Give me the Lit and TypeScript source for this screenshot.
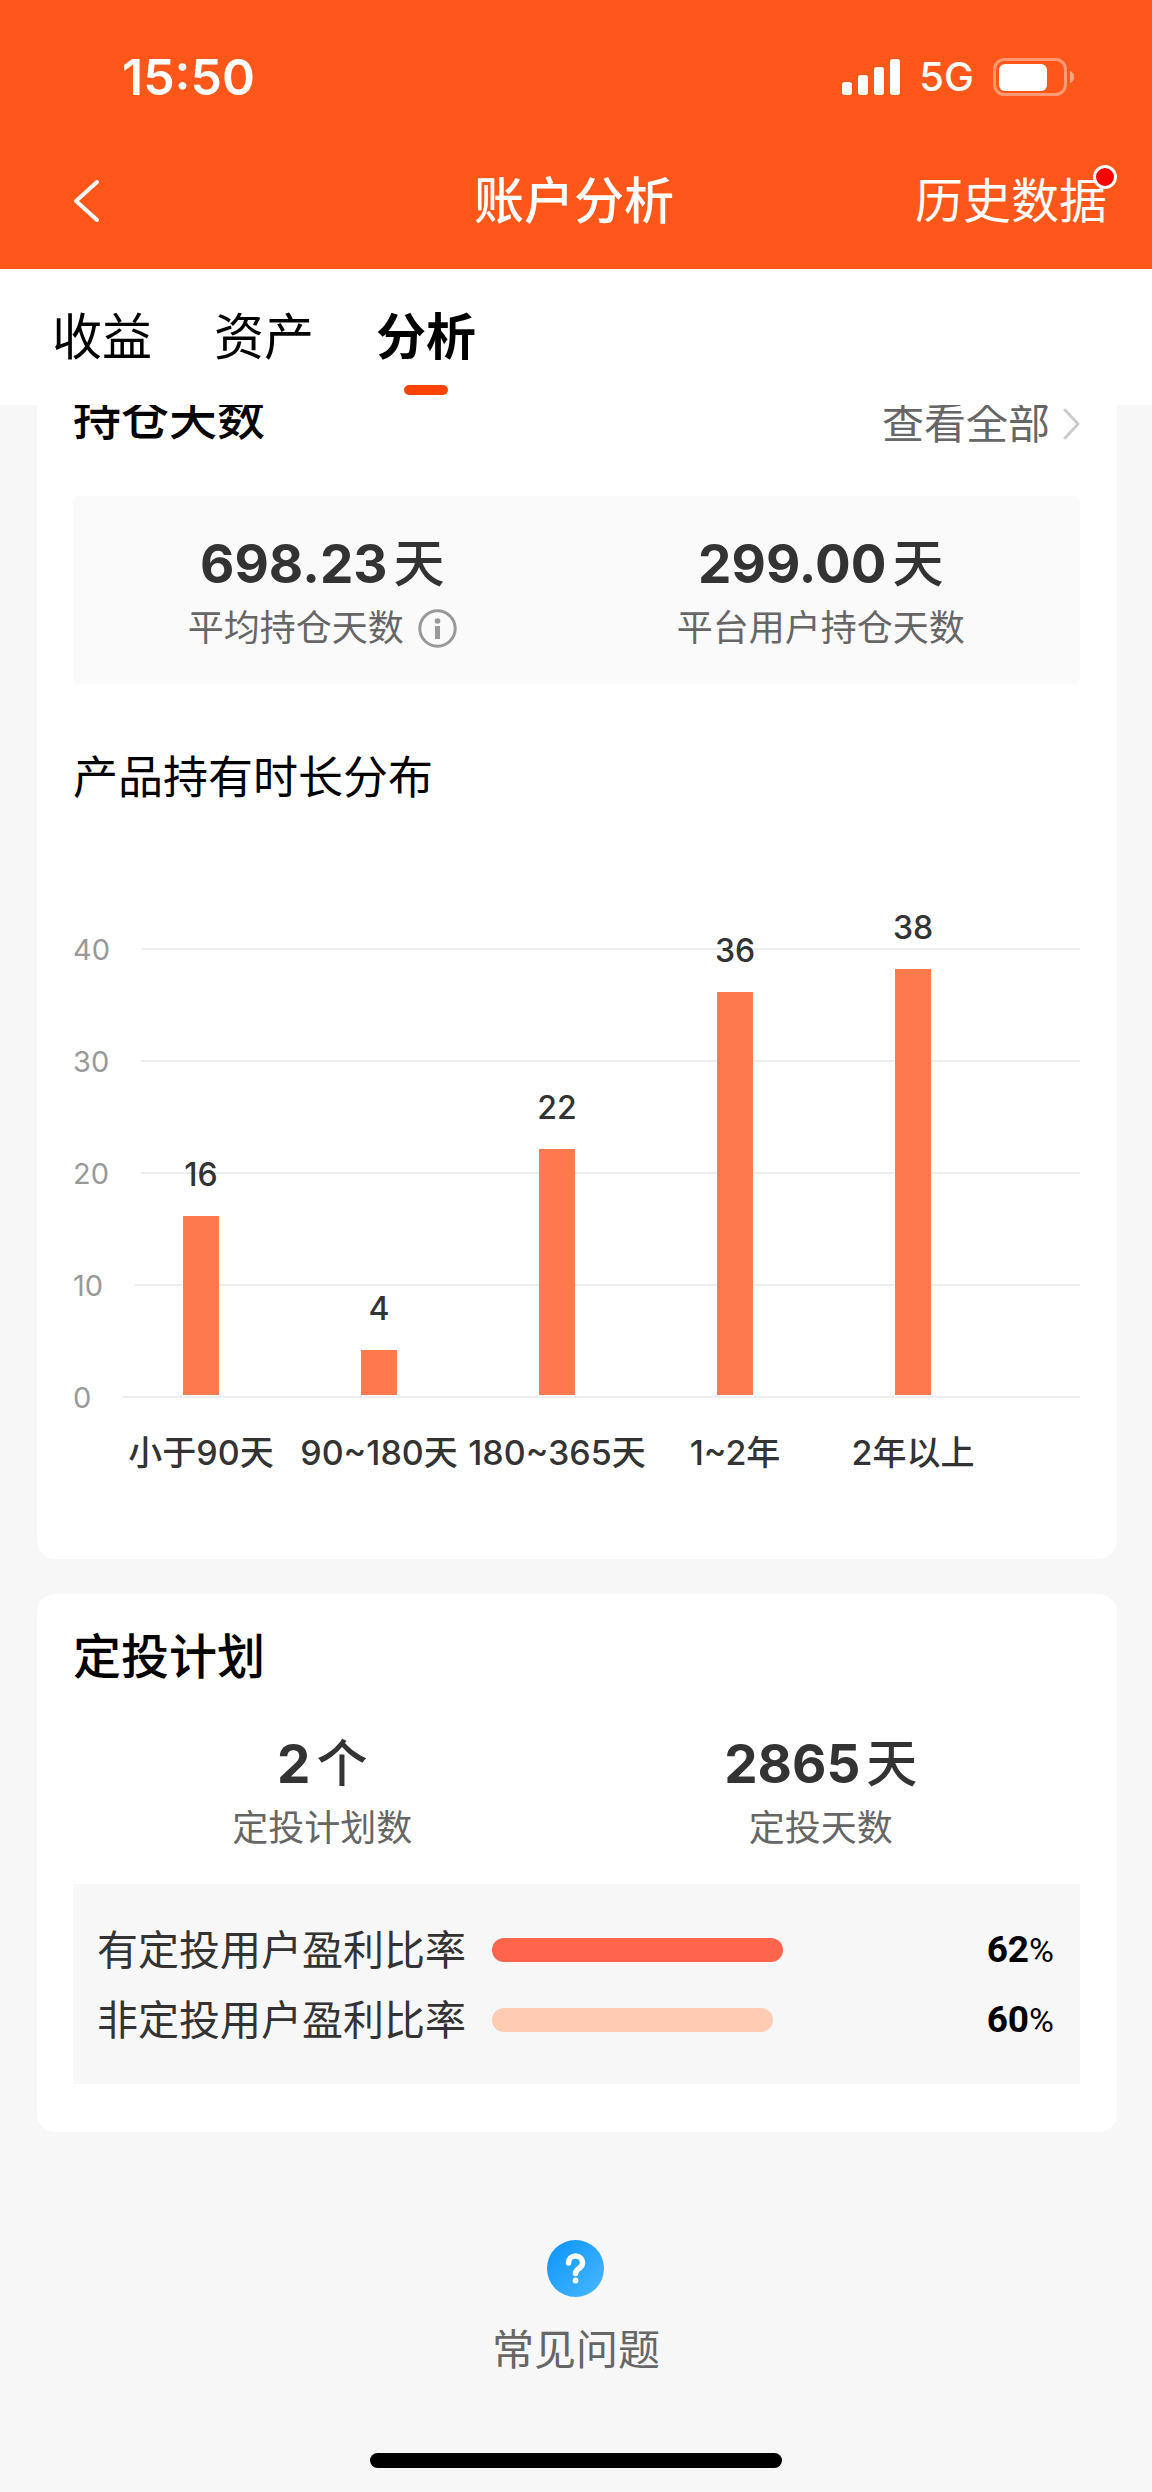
import { LitElement, html, css, svg } from "lit";
import { customElement, property, state } from "lit/decorators.js";
import { classMap } from "lit/directives/class-map.js";
import { styleMap } from "lit/directives/style-map.js";

interface Metric {
  value: string;
  unit: string;
  label: string;
  info?: boolean;
}

interface Bucket {
  label: string;
  count: number;
}

interface Rate {
  label: string;
  percent: number;
  tone: "strong" | "soft";
}

const reset = css`
  * {
    box-sizing: border-box;
  }
  button,
  a {
    font: inherit;
    color: inherit;
    background: none;
    border: 0;
    margin: 0;
    padding: 0;
    text-decoration: none;
    cursor: pointer;
  }
  svg {
    display: block;
    flex: none;
  }
`;

@customElement("status-bar")
export class StatusBar extends LitElement {
  static styles = [
    reset,
    css`
      :host {
        display: flex;
        align-items: center;
        justify-content: space-between;
        padding: 47px 78px 0 122px;
        line-height: 60px;
      }
      .time {
        font-size: 50px;
        font-weight: 600;
      }
      .indicators {
        display: flex;
        align-items: center;
        gap: 19px;
      }
      .network {
        font-size: 40px;
        font-weight: 500;
      }
    `,
  ];

  render() {
    return html`
      <span class="time">15:50</span>
      <div class="indicators">
        <svg width="58" height="38" viewBox="0 0 58 38" fill="#fff" aria-hidden="true">
          <rect x="0" y="24" width="10" height="13" rx="3" />
          <rect x="16" y="17" width="10" height="20" rx="3" />
          <rect x="32" y="9" width="10" height="28" rx="3" />
          <rect x="48" y="1" width="10" height="36" rx="3" />
        </svg>
        <span class="network">5G</span>
        <svg width="81" height="38" viewBox="0 0 81 38" aria-hidden="true">
          <rect x="1.5" y="1.5" width="71" height="35" rx="10" fill="none" stroke="#fff" stroke-opacity=".4" stroke-width="3" />
          <rect x="6" y="6" width="48" height="27" rx="6" fill="#fff" />
          <path d="M77 13c3 1 4 3 4 6s-1 5-4 6z" fill="#fff" fill-opacity=".45" />
        </svg>
      </div>
    `;
  }
}

@customElement("metric-pair")
export class MetricPair extends LitElement {
  @property({ attribute: false }) metrics: Metric[] = [];

  static styles = [
    reset,
    css`
      :host {
        display: block;
      }
      .pair {
        display: grid;
        grid-template-columns: 1fr 1fr;
        padding-right: 10px;
      }
      .metric {
        display: flex;
        flex-direction: column;
        align-items: center;
        gap: 12px;
      }
      .figure {
        display: flex;
        align-items: center;
        gap: 6px;
        line-height: 60px;
        color: #333;
      }
      .value {
        font-size: 53px;
        font-weight: 700;
      }
      .unit {
        font-size: 51px;
        font-weight: 500;
      }
      .caption {
        display: flex;
        align-items: center;
        gap: 14px;
        font-size: 36px;
        line-height: 44px;
        color: #666;
      }
    `,
  ];

  render() {
    return html`
      <div class="pair">
        ${this.metrics.map(
          (m) => html`
            <div class="metric">
              <div class="figure">
                <span class="value">${m.value}</span>
                <span class="unit">${m.unit}</span>
              </div>
              <div class="caption">
                <span>${m.label}</span>
                ${m.info
                  ? html`<button aria-label="说明">
                      <svg width="39" height="39" viewBox="0 0 39 39" aria-hidden="true">
                        <circle cx="19.5" cy="19.5" r="17.7" fill="none" stroke="#999" stroke-width="3" />
                        <circle cx="19.5" cy="12" r="2.8" fill="#999" />
                        <rect x="17" y="17" width="5" height="13" fill="#999" />
                      </svg>
                    </button>`
                  : ""}
              </div>
            </div>
          `
        )}
      </div>
    `;
  }
}

@customElement("holding-chart")
export class HoldingChart extends LitElement {
  @property({ attribute: false }) buckets: Bucket[] = [];

  static styles = [
    reset,
    css`
      :host {
        display: block;
      }
      .chart {
        display: grid;
        min-height: 584px;
      }
      .scale,
      .columns {
        grid-area: 1 / 1;
      }
      .tick {
        display: flex;
        align-items: center;
        gap: 32px;
        height: 112px;
        font-size: 29px;
        color: #999;
      }
      .rule {
        flex: 1;
        height: 2px;
        background: #eee;
      }
      .columns {
        display: flex;
        align-items: flex-end;
        align-self: end;
        padding: 0 78px 0 39px;
        font-weight: 500;
        color: #333;
      }
      .column {
        flex: 1 1 0;
        min-width: 0;
        display: flex;
        flex-direction: column;
        align-items: center;
        white-space: nowrap;
      }
      .count {
        font-size: 32px;
        line-height: 40px;
        margin-bottom: 21px;
      }
      .bar {
        width: 36px;
        height: calc(var(--count) * 112px / 10);
        background: #ff794e;
      }
      .bucket {
        margin-top: 34px;
        font-size: 34px;
        line-height: 48px;
        height: 48px;
      }
    `,
  ];

  render() {
    return html`
      <div class="chart">
        <div class="scale">
          ${[40, 30, 20, 10, 0].map((t) => html`<div class="tick"><span>${t}</span><span class="rule"></span></div>`)}
        </div>
        <div class="columns">
          ${this.buckets.map(
            (b) => html`
              <div class="column">
                <span class="count">${b.count}</span>
                <span class="bar" style=${styleMap({ "--count": String(b.count) })}></span>
                <span class="bucket">${b.label}</span>
              </div>
            `
          )}
        </div>
      </div>
    `;
  }
}

@customElement("rate-list")
export class RateList extends LitElement {
  @property({ attribute: false }) rates: Rate[] = [];

  static styles = [
    reset,
    css`
      :host {
        display: block;
        padding: 31px 26px 29px 24px;
        background: #f7f7f7;
        line-height: 60px;
      }
      .row {
        display: flex;
        align-items: center;
        height: 70px;
      }
      .label {
        font-size: 41px;
        color: #333;
        margin-right: 26px;
      }
      .track {
        flex: 1;
      }
      .fill {
        height: 24px;
        border-radius: 12px;
      }
      .strong {
        background: #ff654d;
      }
      .soft {
        background: #ffccb3;
      }
      .percent {
        width: 93px;
        text-align: right;
        font-family: "Roboto", "Noto Sans CJK SC", sans-serif;
        font-size: 37px;
        font-weight: 700;
        color: #000;
      }
      .sign {
        font-size: 34px;
        font-weight: 400;
      }
    `,
  ];

  render() {
    return this.rates.map(
      (r) => html`
        <div class="row">
          <span class="label">${r.label}</span>
          <div class="track">
            <div class=${classMap({ fill: true, [r.tone]: true })} style=${styleMap({ width: `${r.percent}%` })}></div>
          </div>
          <span class="percent">${r.percent}<span class="sign">%</span></span>
        </div>
      `
    );
  }
}

@customElement("app-root")
export class AppRoot extends LitElement {
  @state() private tab = "分析";

  private readonly tabs = ["收益", "资产", "分析"];

  private readonly holding: Metric[] = [
    { value: "698.23", unit: "天", label: "平均持仓天数", info: true },
    { value: "299.00", unit: "天", label: "平台用户持仓天数" },
  ];

  private readonly plan: Metric[] = [
    { value: "2", unit: "个", label: "定投计划数" },
    { value: "2865", unit: "天", label: "定投天数" },
  ];

  private readonly buckets: Bucket[] = [
    { label: "小于90天", count: 16 },
    { label: "90~180天", count: 4 },
    { label: "180~365天", count: 22 },
    { label: "1~2年", count: 36 },
    { label: "2年以上", count: 38 },
  ];

  private readonly rates: Rate[] = [
    { label: "有定投用户盈利比率", percent: 62, tone: "strong" },
    { label: "非定投用户盈利比率", percent: 60, tone: "soft" },
  ];

  static styles = [
    reset,
    css`
      :host {
        display: block;
        min-height: 100vh;
        background: #f7f7f7;
        color: #000;
        font-family: "Inter", "Noto Sans CJK SC", sans-serif;
      }
      .header {
        background: #ff571a;
        color: #fff;
        padding-bottom: 21px;
      }
      .nav {
        display: grid;
        grid-template-columns: 1fr auto 1fr;
        align-items: center;
        margin-top: 47px;
        padding: 0 45px 0 69px;
        line-height: 94px;
      }
      .back {
        justify-self: start;
      }
      .title {
        margin: 0 28px 0 0;
        font-size: 50px;
        font-weight: 500;
      }
      .history {
        position: relative;
        justify-self: end;
        font-size: 48px;
      }
      .badge {
        position: absolute;
        top: 11px;
        right: -10px;
        width: 24px;
        height: 24px;
        border: 3px solid #fff;
        border-radius: 50%;
        background: #f90000;
      }
      .tabs {
        display: flex;
        gap: 62px;
        padding: 35px 52px 10px;
        background: #fff;
      }
      .tab {
        display: flex;
        flex-direction: column;
        align-items: center;
        gap: 15px;
        font-size: 50px;
        line-height: 66px;
      }
      .tab::after {
        content: "";
        width: 44px;
        height: 10px;
        border-radius: 5px;
      }
      .tab.active {
        font-weight: 600;
      }
      .tab.active::after {
        background: #ff4400;
      }
      .content {
        display: flex;
        flex-direction: column;
        gap: 35px;
        padding: 0 35px 0 37px;
        overflow: hidden;
      }
      .card {
        padding: 33px 37px 48px 36px;
        border-radius: 18px;
        background: #fff;
      }
      .card.scrolled {
        margin-top: -50px;
        padding-bottom: 82px;
      }
      .heading {
        display: flex;
        align-items: flex-end;
        justify-content: space-between;
      }
      .heading h2 {
        margin: 0;
        font-size: 48px;
        line-height: 60px;
        font-weight: 500;
      }
      .more {
        display: flex;
        align-items: center;
        gap: 13px;
        font-size: 42px;
        line-height: 48px;
        color: #666;
      }
      .panel {
        margin-top: 48px;
        padding: 38px 0 34px;
        border-radius: 6px;
        background: #fafafa;
      }
      .plain {
        margin: 47px 0 34px;
      }
      .subtitle {
        margin: 64px 0 85px;
        font-size: 45px;
        line-height: 60px;
        font-weight: 400;
      }
      .footer {
        display: flex;
        flex-direction: column;
        align-items: center;
        padding: 108px 0 23px;
      }
      .help {
        display: flex;
        flex-direction: column;
        align-items: center;
        gap: 28px;
        font-size: 42px;
        line-height: 50px;
        color: #666;
      }
      .home {
        width: 412px;
        height: 15px;
        margin-top: 78px;
        border-radius: 8px;
        background: #000;
      }
    `,
  ];

  private chevron(d: string, w: number, h: number, stroke: string, width: number) {
    return html`<svg width=${w} height=${h} viewBox="0 0 ${w} ${h}" fill="none" aria-hidden="true">
      ${svg`<path d=${d} stroke=${stroke} stroke-width=${width} stroke-linecap="round" stroke-linejoin="round" />`}
    </svg>`;
  }

  render() {
    return html`
      <header class="header">
        <status-bar></status-bar>
        <nav class="nav">
          <button class="back" aria-label="返回">${this.chevron("M28 3 7 22l21 19", 31, 44, "#fff", 4)}</button>
          <h1 class="title">账户分析</h1>
          <a class="history" href="#history">历史数据<span class="badge"></span></a>
        </nav>
      </header>
      <div class="tabs" role="tablist">
        ${this.tabs.map(
          (t) => html`
            <button
              class=${classMap({ tab: true, active: t === this.tab })}
              role="tab"
              aria-selected=${t === this.tab ? "true" : "false"}
              @click=${() => (this.tab = t)}
            >
              ${t}
            </button>
          `
        )}
      </div>
      <main class="content">
        <section class="card scrolled">
          <div class="heading">
            <h2>持仓天数</h2>
            <a class="more" href="#holding">查看全部${this.chevron("M2 3l13 14L2 31", 17, 34, "#ccc", 3)}</a>
          </div>
          <metric-pair class="panel" .metrics=${this.holding}></metric-pair>
          <h3 class="subtitle">产品持有时长分布</h3>
          <holding-chart .buckets=${this.buckets}></holding-chart>
        </section>
        <section class="card">
          <div class="heading"><h2>定投计划</h2></div>
          <metric-pair class="plain" .metrics=${this.plan}></metric-pair>
          <rate-list .rates=${this.rates}></rate-list>
        </section>
      </main>
      <footer class="footer">
        <a class="help" href="#faq">
          <svg width="57" height="57" viewBox="0 0 57 57" aria-hidden="true">
            <defs>
              <linearGradient id="help-fill" x1="0" y1="0" x2="1" y2="1">
                <stop offset="0" stop-color="#0a94ff" />
                <stop offset="1" stop-color="#4ab8ff" />
              </linearGradient>
            </defs>
            <circle cx="28.5" cy="28.5" r="28.5" fill="url(#help-fill)" />
            <path d="M21.5 23c0-4 3-7 7-7s7 3 7 7c0 6-7 5-7 10.5" fill="none" stroke="#fff" stroke-width="5.6" stroke-linecap="round" />
            <circle cx="28.5" cy="40.5" r="2.9" fill="#fff" />
          </svg>
          <span>常见问题</span>
        </a>
        <div class="home"></div>
      </footer>
    `;
  }
}
